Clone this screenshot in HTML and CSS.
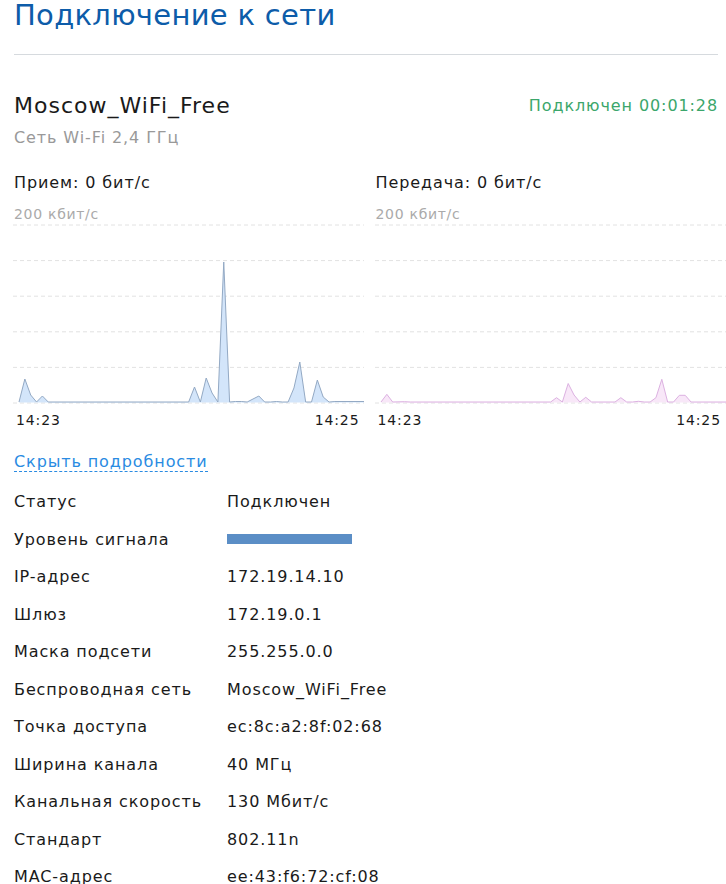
FILE: index.html
```html
<!DOCTYPE html>
<html lang="ru">
<head>
    <meta charset="UTF-8">
    <meta name="viewport" content="width=device-width, initial-scale=1.0">
    <title>Подключение к сети</title>
    <link rel="stylesheet" href="styles.css">
</head>
<body>
    <div class="page">
        <h1 class="page-title">Подключение к сети</h1>

        <div class="net-header">
            <div class="net-info">
                <div class="net-name">Moscow_WiFi_Free</div>
                <div class="net-type">Сеть Wi-Fi 2,4 ГГц</div>
            </div>
            <div class="net-state">Подключен 00:01:28</div>
        </div>

        <div class="charts">
            <div class="chart">
                <div class="chart-title">Прием: 0 бит/с</div>
                <div class="chart-scale">200 кбит/с</div>
                <svg class="chart-plot" viewBox="0 0 351 182" width="351" height="182">
                    <g class="grid">
                        <line x1="0" y1="3" x2="351" y2="3"/>
                        <line x1="0" y1="38.6" x2="351" y2="38.6"/>
                        <line x1="0" y1="74.2" x2="351" y2="74.2"/>
                        <line x1="0" y1="109.8" x2="351" y2="109.8"/>
                        <line x1="0" y1="145.4" x2="351" y2="145.4"/>
                        <line x1="0" y1="181" x2="351" y2="181"/>
                    </g>
                    <!-- прием -->
                    <polygon class="area rx" points="6,180.5 6,180 11.85,157 17.7,173 23.55,180 29.4,174 35.25,180 175.65,180 181.5,165 187.35,180 193.2,156 199.05,171 204.9,180 210.75,40 216.6,180 222.45,179.5 228.3,179.5 234.15,180 245.85,174 251.7,180 257.55,180 263.4,179.5 269.25,180 275.1,180 280.95,166 286.8,140 292.65,180 298.5,180 304.35,158 310.2,175 316.05,180 321.9,179.5 351,179.5 351,180.5"/>
                    <polyline class="line rx" points="6,180 11.85,157 17.7,173 23.55,180 29.4,174 35.25,180 175.65,180 181.5,165 187.35,180 193.2,156 199.05,171 204.9,180 210.75,40 216.6,180 222.45,179.5 228.3,179.5 234.15,180 245.85,174 251.7,180 257.55,180 263.4,179.5 269.25,180 275.1,180 280.95,166 286.8,140 292.65,180 298.5,180 304.35,158 310.2,175 316.05,180 321.9,179.5 351,179.5"/>
                </svg>
                <div class="chart-time">
                    <span>14:23</span>
                    <span>14:25</span>
                </div>
            </div>
            <div class="chart">
                <div class="chart-title">Передача: 0 бит/с</div>
                <div class="chart-scale">200 кбит/с</div>
                <svg class="chart-plot" viewBox="0 0 351 182" width="351" height="182">
                    <g class="grid">
                        <line x1="0" y1="3" x2="351" y2="3"/>
                        <line x1="0" y1="38.6" x2="351" y2="38.6"/>
                        <line x1="0" y1="74.2" x2="351" y2="74.2"/>
                        <line x1="0" y1="109.8" x2="351" y2="109.8"/>
                        <line x1="0" y1="145.4" x2="351" y2="145.4"/>
                        <line x1="0" y1="181" x2="351" y2="181"/>
                    </g>
                    <!-- передача -->
                    <polygon class="area tx" points="6,180.5 6,180 11.85,172.3 17.7,180 29.4,179.7 35.25,180 175.65,180 181.5,175.7 187.35,180 193.2,161.5 199.05,173 204.9,180 210.75,175.3 216.6,180 240,180 245.85,175.7 251.7,180 257.55,180 263.4,179.3 269.25,180 275.1,180 280.95,175.7 286.8,157.3 292.65,180 298.5,180 304.35,173.3 310.2,173.3 316.05,180 351,180 351,180.5"/>
                    <polyline class="line tx" points="6,180 11.85,172.3 17.7,180 29.4,179.7 35.25,180 175.65,180 181.5,175.7 187.35,180 193.2,161.5 199.05,173 204.9,180 210.75,175.3 216.6,180 240,180 245.85,175.7 251.7,180 257.55,180 263.4,179.3 269.25,180 275.1,180 280.95,175.7 286.8,157.3 292.65,180 298.5,180 304.35,173.3 310.2,173.3 316.05,180 351,180"/>
                </svg>
                <div class="chart-time">
                    <span>14:23</span>
                    <span>14:25</span>
                </div>
            </div>
        </div>

        <div class="toggle-row">
            <a class="details-toggle" href="#">Скрыть подробности</a>
        </div>

        <div class="details">
            <div class="details-row"><span class="label">Статус</span><span class="value">Подключен</span></div>
            <div class="details-row"><span class="label">Уровень сигнала</span><span class="value"><span class="signal-bar"></span></span></div>
            <div class="details-row"><span class="label">IP-адрес</span><span class="value">172.19.14.10</span></div>
            <div class="details-row"><span class="label">Шлюз</span><span class="value">172.19.0.1</span></div>
            <div class="details-row"><span class="label">Маска подсети</span><span class="value">255.255.0.0</span></div>
            <div class="details-row"><span class="label">Беспроводная сеть</span><span class="value">Moscow_WiFi_Free</span></div>
            <div class="details-row"><span class="label">Точка доступа</span><span class="value">ec:8c:a2:8f:02:68</span></div>
            <div class="details-row"><span class="label">Ширина канала</span><span class="value">40 МГц</span></div>
            <div class="details-row"><span class="label">Канальная скорость</span><span class="value">130 Мбит/с</span></div>
            <div class="details-row"><span class="label">Стандарт</span><span class="value">802.11n</span></div>
            <div class="details-row"><span class="label">MAC-адрес</span><span class="value">ee:43:f6:72:cf:08</span></div>
        </div>
    </div>
</body>
</html>
```

FILE: styles.css
```css
body {
  margin: 0;
  font-family: "DejaVu Sans", Verdana, sans-serif;
  font-size: 16px;
  letter-spacing: 0.9px;
  color: #1a1a1a;
  background: #fff;
  overflow: hidden;
}

.page {
  padding: 0 8px 0 14px;
}

.page-title {
  margin: -2px 0 0;
  padding-bottom: 22px;
  border-bottom: 1px solid #d6dade;
  font-size: 29px;
  font-weight: normal;
  line-height: 34px;
  letter-spacing: 0.3px;
  color: #0d5ca9;
}

/* шапка с именем сети */
.net-header {
  display: flex;
  justify-content: space-between;
  align-items: flex-start;
  padding-top: 37px;
}

.net-name {
  font-size: 22px;
  line-height: 28px;
  letter-spacing: 1px;
}

.net-type {
  margin-top: 8px;
  color: #999;
}

.net-state {
  margin-top: 4px;
  color: #3ba66b;
}

/* графики */
.charts {
  display: grid;
  grid-template-columns: 1fr 1fr;
  column-gap: 11px;
  margin-right: -8px;
  margin-top: 26px;
}

.chart-title {
  line-height: 20px;
}

.chart-scale {
  margin-top: 13px;
  font-size: 14px;
  line-height: 16px;
  letter-spacing: 0.7px;
  color: #aaa;
}

.chart-plot {
  display: block;
  margin-left: -1px;
  overflow: visible;
}

.grid line {
  stroke: #e2e2e2;
  stroke-width: 1;
  stroke-dasharray: 4 3;
}

.area.rx {
  fill: #d3e5fa;
}

.line.rx {
  fill: none;
  stroke: #93a9c4;
  stroke-width: 1;
}

.area.tx {
  fill: #f8e7f8;
}

.line.tx {
  fill: none;
  stroke: #dcb1e1;
  stroke-width: 1;
}

.chart-time {
  display: flex;
  justify-content: space-between;
  padding: 8px 5px 0 2px;
  font-size: 14px;
  letter-spacing: 0.9px;
}

/* подробности */
.toggle-row {
  display: flex;
  margin-top: 25px;
}

.details-toggle {
  color: #2a8be2;
  text-decoration: none;
  border-bottom: 1px dashed #2a8be2;
  line-height: 18px;
}

.details {
  margin-top: 11px;
}

.details-row {
  display: flex;
  align-items: center;
  height: 37.5px;
}

.label {
  width: 213px;
  flex-shrink: 0;
}

.signal-bar {
  display: block;
  width: 125px;
  height: 10px;
  background: #5b8ec6;
}
```
